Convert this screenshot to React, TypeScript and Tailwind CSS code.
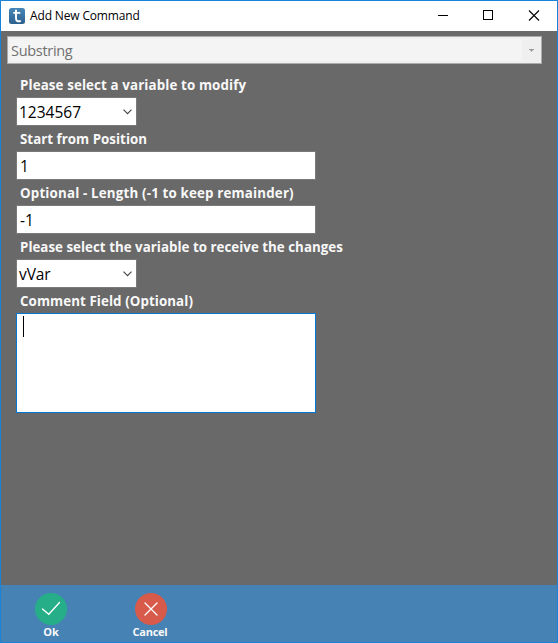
import type { ReactNode } from "react";

function Label({ children, className }: { children: ReactNode; className: string }) {
  return (
    <div className={`flex h-[25px] items-center whitespace-nowrap pl-1 pt-[2px] text-[13.33px] font-bold text-[#f8f8f8] ${className}`}>
      <span>{children}</span>
    </div>
  );
}

function SelectBox({ value, className }: { value: string; className: string }) {
  return (
    <div className="flex h-[29px] w-[121px] items-center justify-between border border-[#7a7a7a] bg-white pl-0.5 pr-1 text-[15.5px] leading-[26px] text-black">
      <span className={className}>{value}</span>
      <svg width="9" height="6" viewBox="0 0 9 6" fill="none" stroke="#444" strokeWidth="1.1">
        <path d="M.5 .7 4.5 4.7 8.5 .7" />
      </svg>
    </div>
  );
}

function TextBox({ value }: { value: string }) {
  return (
    <div className="flex h-[29px] w-[300px] items-center border border-[#7a7a7a] bg-white pl-[3px] text-[15.5px] leading-[26px] text-black">
      <span>{value}</span>
    </div>
  );
}

function AppLogo() {
  return (
    <svg width="16" height="16" viewBox="0 0 16 16">
      <defs>
        <linearGradient id="logo" x1="0" y1="0" x2="0" y2="1">
          <stop offset="0" stopColor="#4586b7" />
          <stop offset="1" stopColor="#2d608f" />
        </linearGradient>
      </defs>
      <rect width="16" height="16" rx="2.5" fill="url(#logo)" />
      <path d="M7 1.8v8.7c0 2.8 2.2 3.3 4.8 2.3M4.3 4.9h7" fill="none" stroke="white" strokeWidth="1.9" />
    </svg>
  );
}

export default function App() {
  return (
    <div className="flex h-[643px] w-[558px] flex-col overflow-hidden border border-[#1883d7] bg-[#696969] font-['Open_Sans','Noto_Sans',sans-serif]">
      <header className="flex h-[30px] shrink-0 items-center bg-white pl-2">
        <AppLogo />
        <span className="ml-[5px] flex-1 whitespace-nowrap text-[12px] tracking-[-0.15px] text-black">Add New Command</span>
        <svg width="120" height="30" viewBox="0 0 120 30" fill="none" stroke="black" shapeRendering="crispEdges">
          <path d="M1 14.5h10M46.5 9.5h9v9h-9z" />
          <path d="m92 9.5 10 10m0-10-10 10" shapeRendering="auto" strokeWidth="1.1" />
        </svg>
      </header>

      <main className="flex-1">
        <div className="ml-1.5 mt-[5px] flex h-[28px] w-[535px] border border-[#acacac] bg-[#efefef]">
          <div className="my-0.5 ml-0.5 flex flex-1 items-center bg-[#f4f4f4] pl-px pt-0.5 text-[14.5px] leading-[22px] text-[#707070]">
            <span className="tracking-[-0.3px]">Substring</span>
          </div>
          <div className="flex w-[19px] items-center justify-center">
            <svg width="5" height="3" viewBox="0 0 5 3" fill="#999">
              <path d="M0 0h5v1H4L2.5 3 1 1H0z" />
            </svg>
          </div>
        </div>

        <div className="ml-[15px] mt-2">
          <Label className="tracking-[0.12px]">Please select a variable to modify</Label>
          <SelectBox value="1234567" className="" />
          <Label className="tracking-[0.02px]">Start from Position</Label>
          <TextBox value="1" />
          <Label className="tracking-[0.17px]">Optional - Length (-1 to keep remainder)</Label>
          <TextBox value="-1" />
          <Label className="tracking-[0.02px]">Please select the variable to receive the changes</Label>
          <SelectBox value="vVar" className="tracking-[-0.1px]" />
          <Label className="tracking-[0.08px]">Comment Field (Optional)</Label>
          <div className="h-[100px] w-[300px] border border-[#0078d7] bg-white pl-1.5 pt-0.5">
            <div className="h-[21px] w-px bg-black" />
          </div>
        </div>
      </main>

      <footer className="flex h-[57px] shrink-0 bg-[#4682b4] pt-2 text-[11px] font-bold leading-[14px] text-[#f8f8f8]">
        <div className="flex w-[100px] flex-col items-center">
          <svg width="32" height="32" viewBox="0 0 32 32" fill="none">
            <circle cx="16" cy="16" r="16" fill="#26ae88" />
            <path d="m7.5 16 6.3 5.3L24.5 9.5" stroke="white" strokeWidth="1.3" strokeLinecap="round" />
          </svg>
          <span>Ok</span>
        </div>
        <div className="flex w-[100px] flex-col items-center">
          <svg width="32" height="32" viewBox="0 0 32 32" fill="none">
            <circle cx="16" cy="16" r="16" fill="#d75a4a" />
            <path d="m10 10 12 12m0-12L10 22" stroke="white" strokeWidth="1.3" strokeLinecap="round" />
          </svg>
          <span className="pr-0.5 tracking-[-0.25px]">Cancel</span>
        </div>
      </footer>
    </div>
  );
}
